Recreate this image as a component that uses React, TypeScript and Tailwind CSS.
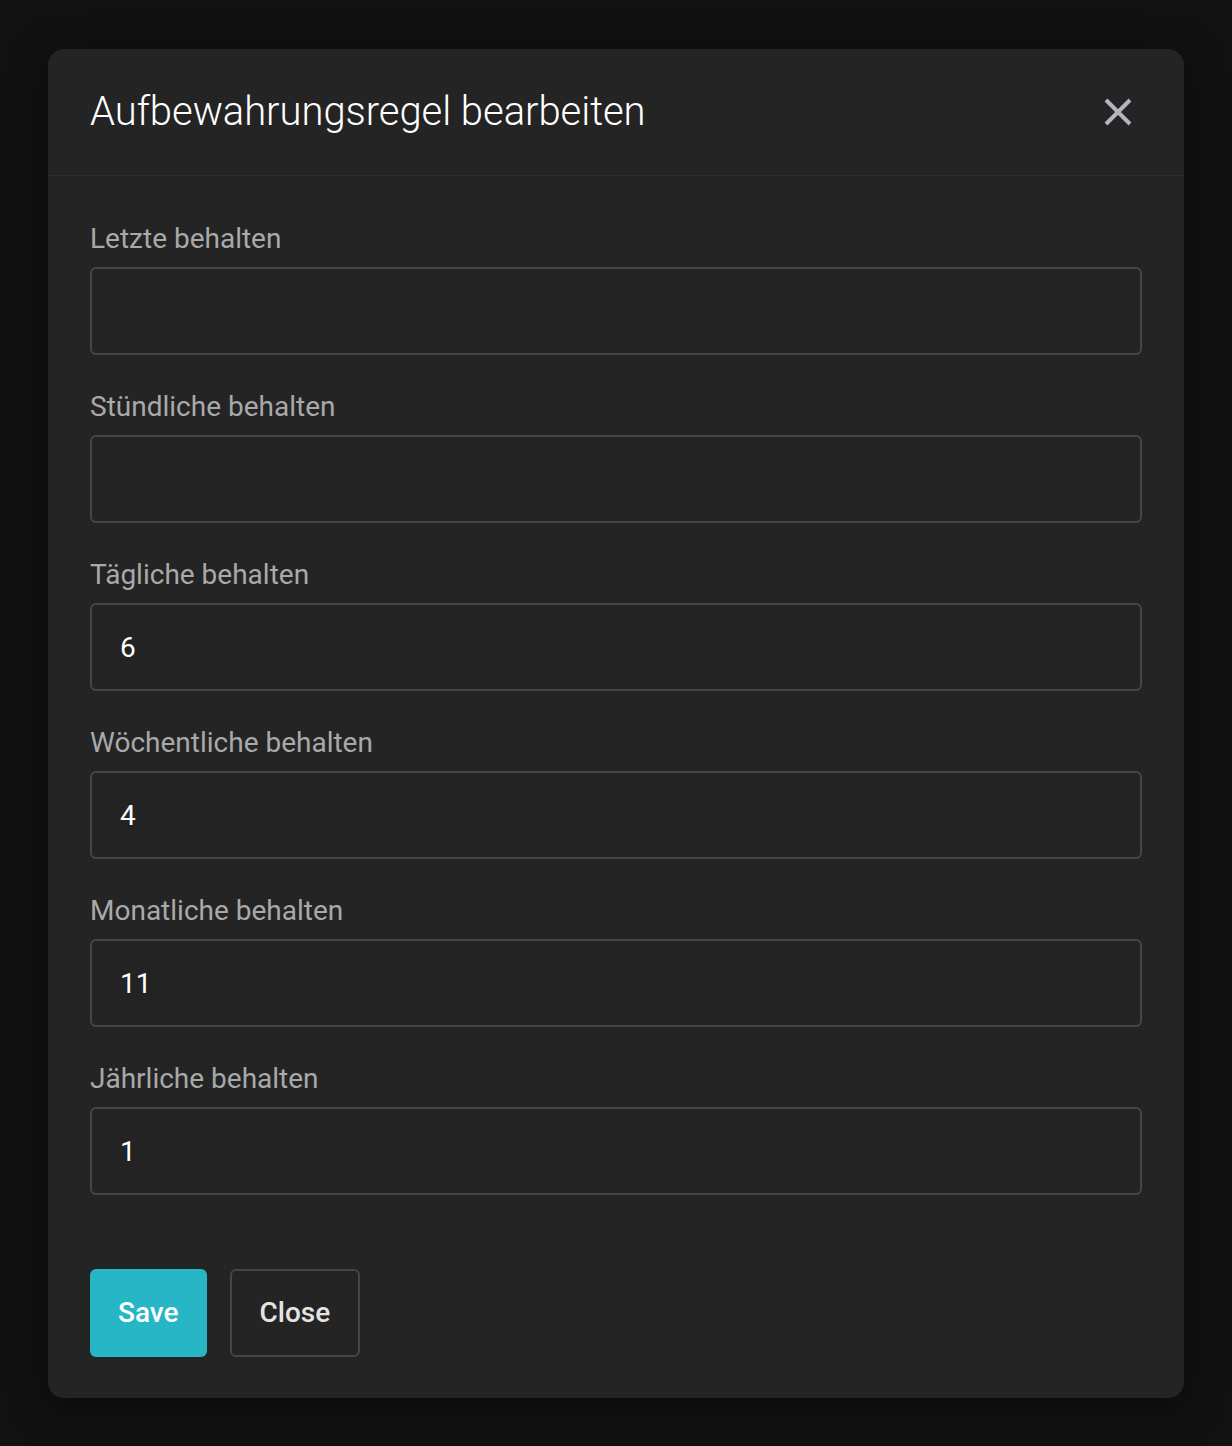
import { useState } from 'react';

const fields = [
  { label: 'Letzte behalten', value: '' },
  { label: 'Stündliche behalten', value: '' },
  { label: 'Tägliche behalten', value: '6' },
  { label: 'Wöchentliche behalten', value: '4' },
  { label: 'Monatliche behalten', value: '11' },
  { label: 'Jährliche behalten', value: '1' },
];

export default function App() {
  const [values, setValues] = useState(fields.map(f => f.value));

  return (
    <div className="min-h-[1446px] bg-[#121212] px-[48px] pt-[49px] pb-[48px] font-['Roboto',sans-serif]">
      <div className="bg-[#242424] rounded-[16px] shadow-[0_8px_40px_rgba(0,0,0,0.5)]">
        <div className="h-[127px] flex items-center justify-between pl-[42px] pr-[52px] border-b border-[#2f2f2f]">
          <h2 className="text-[40px] font-light text-white leading-none tracking-[-0.05px]">Aufbewahrungsregel bearbeiten</h2>
          <button className="w-[28px] h-[28px] flex items-center justify-center text-[#b4b6bf]">
            <svg width="28" height="28" viewBox="0 0 28 28" fill="none">
              <path d="M2 2L26 26M26 2L2 26" stroke="currentColor" strokeWidth="4" />
            </svg>
          </button>
        </div>

        <div className="px-[42px] pt-[42px] pb-[41px]">
          <div className="flex flex-col gap-[31px]">
            {fields.map((f, i) => (
              <div key={f.label} className="flex flex-col">
                <label className="text-[28px] leading-[42px] text-[#a9a9a9] mb-[7px]">{f.label}</label>
                <input
                  type="text"
                  value={values[i]}
                  onChange={e => setValues(v => v.map((x, j) => (j === i ? e.target.value : x)))}
                  className="h-[88px] w-full bg-[#232323] border-2 border-[#464646] rounded-[6px] px-[28px] text-[28px] text-white outline-none"
                />
              </div>
            ))}
          </div>

          <div className="flex gap-[23px] mt-[74px]">
            <button className="h-[88px] px-[28px] rounded-[6px] bg-[#27b6c5] text-white text-[28px] font-medium">Save</button>
            <button className="h-[88px] px-[28px] rounded-[6px] border-2 border-[#464646] text-[#e4e4e4] text-[28px] font-medium">Close</button>
          </div>
        </div>
      </div>
    </div>
  );
}
